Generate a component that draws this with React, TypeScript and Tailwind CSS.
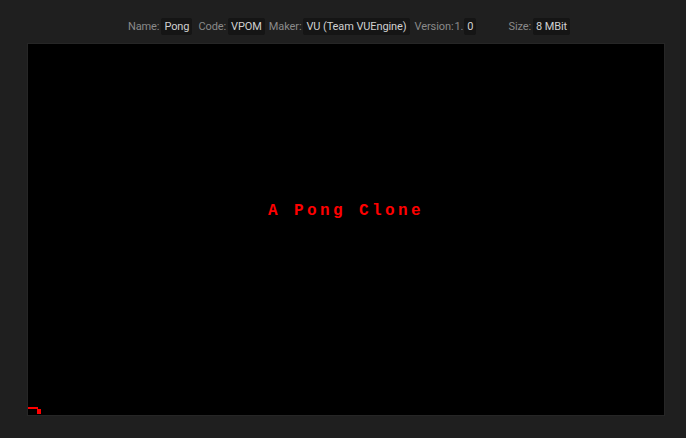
import React from "react";

function Val({ children }: { children: React.ReactNode }) {
  return (
    <span className="rounded-[2px] bg-[#151515] px-[3px] py-[1px] text-[#d0d0d0]">{children}</span>
  );
}

function Label({ children }: { children: React.ReactNode }) {
  return <span className="text-[#8a8a8a]">{children}</span>;
}

export default function App() {
  return (
    <div className="flex h-[438px] w-[686px] flex-col bg-[#1f1f1f]" style={{ fontFamily: 'Roboto, sans-serif' }}>
      <div className="flex h-[43px] items-center justify-center pl-[12px] pt-[10px] text-[11px] leading-[15px] tracking-[-0.1px]">
        <div className="flex items-center gap-[2px]">
          <Label>Name:</Label>
          <Val>Pong</Val>
        </div>
        <div className="ml-[6px] flex items-center gap-[2px]">
          <Label>Code:</Label>
          <Val>VPOM</Val>
        </div>
        <div className="ml-[4px] flex items-center gap-[2px]">
          <Label>Maker:</Label>
          <Val>VU (Team VUEngine)</Val>
        </div>
        <div className="ml-[5px] flex items-center gap-[1px]">
          <Label>Version:</Label>
          <Label>1.</Label>
          <Val>0</Val>
        </div>
        <div className="ml-[32px] flex items-center gap-[2px]">
          <Label>Size:</Label>
          <Val>8 MBit</Val>
        </div>
      </div>
      <div className="ml-[27px] mr-[21px] flex h-[373px] flex-col border border-[#262626] bg-black">
        <div className="flex flex-1 justify-center pt-[159px]">
          <span
            className="text-[16px] font-bold leading-[16px] text-[#ff0000] tracking-[3.4px]"
            style={{ fontFamily: '"Liberation Mono", monospace' }}
          >
            A Pong Clone
          </span>
        </div>
        <div className="relative h-[8px]">
          <div className="absolute left-0 top-[0px] h-[2px] w-[10px] bg-[#ff0000]" />
          <div className="absolute left-[9px] top-[2px] h-[5px] w-[4px] bg-[#ff0000]" />
        </div>
      </div>
    </div>
  );
}
